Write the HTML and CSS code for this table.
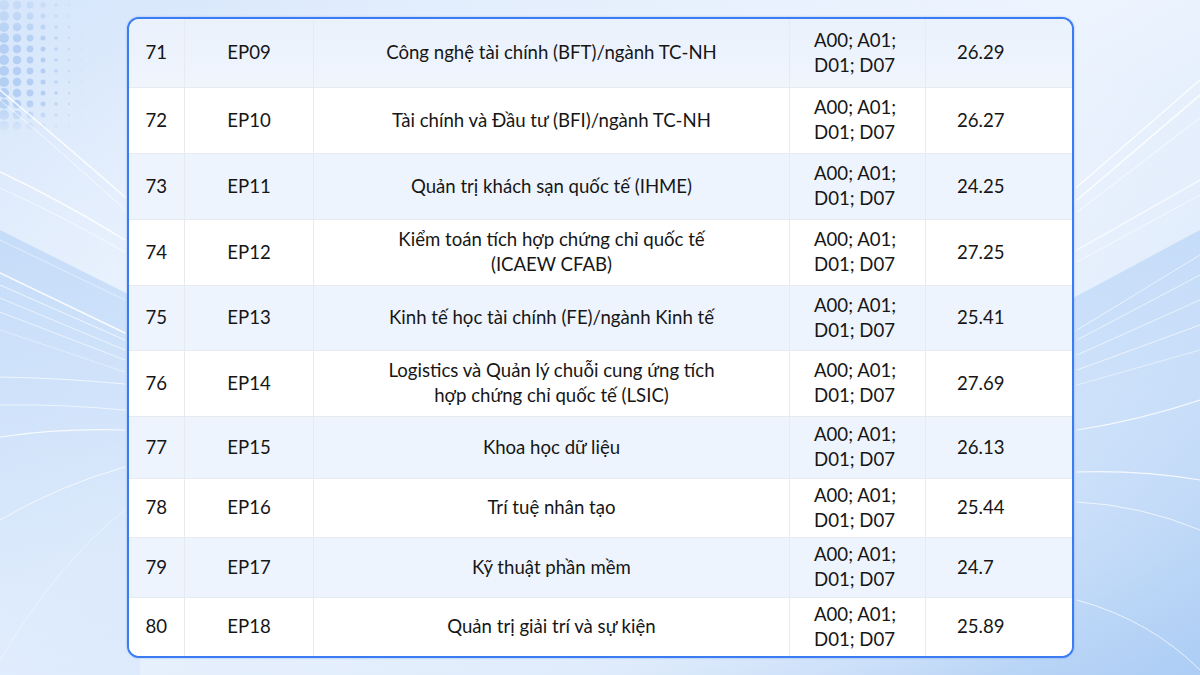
FILE: index.html
```html
<!DOCTYPE html>
<html lang="vi">
<head>
<meta charset="utf-8">
<title>Điểm chuẩn</title>
<link rel="stylesheet" href="styles.css">
</head>
<body>
<svg class="bg" viewBox="0 0 1200 675" preserveAspectRatio="none" aria-hidden="true">
  <defs>
    <linearGradient id="g1" x1="0" y1="0" x2="1" y2="1">
      <stop offset="0" stop-color="#d6e6fb"/>
      <stop offset="0.45" stop-color="#edf4fe"/>
      <stop offset="0.75" stop-color="#dbe9fb"/>
      <stop offset="1" stop-color="#a9cbf4"/>
    </linearGradient>
    <radialGradient id="g2" cx="0.5" cy="0.5" r="0.6">
      <stop offset="0" stop-color="#f4f8ff" stop-opacity="0.9"/>
      <stop offset="1" stop-color="#f4f8ff" stop-opacity="0"/>
    </radialGradient>
    <linearGradient id="band" x1="0" y1="0" x2="0" y2="1">
      <stop offset="0" stop-color="#b9d5f7" stop-opacity="0.7"/>
      <stop offset="1" stop-color="#b9d5f7" stop-opacity="0.2"/>
    </linearGradient>
    <linearGradient id="fade" x1="0" y1="0" x2="0" y2="1">
      <stop offset="0" stop-color="#fff" stop-opacity="0.4"/>
      <stop offset="0.3" stop-color="#fff" stop-opacity="1"/>
      <stop offset="0.75" stop-color="#fff" stop-opacity="1"/>
      <stop offset="1" stop-color="#fff" stop-opacity="0"/>
    </linearGradient>
    <mask id="dm"><rect x="0" y="0" width="120" height="135" fill="url(#fade)"/></mask>
    <pattern id="p0" width="13" height="11" patternUnits="userSpaceOnUse"><circle cx="4" cy="5" r="5" fill="#b4cff3"/></pattern>
    <pattern id="p1" width="13" height="11" patternUnits="userSpaceOnUse"><circle cx="4" cy="5" r="4.3" fill="#b4cff3"/></pattern>
    <pattern id="p2" width="13" height="11" patternUnits="userSpaceOnUse"><circle cx="4" cy="5" r="3.4" fill="#b4cff3"/></pattern>
    <pattern id="p3" width="13" height="11" patternUnits="userSpaceOnUse"><circle cx="4" cy="5" r="2.5" fill="#b4cff3"/></pattern>
    <pattern id="p4" width="13" height="11" patternUnits="userSpaceOnUse"><circle cx="4" cy="5" r="1.8" fill="#bcd4f3"/></pattern>
    <pattern id="p5" width="13" height="11" patternUnits="userSpaceOnUse"><circle cx="4" cy="5" r="1.2" fill="#c4daf5"/></pattern>
    <pattern id="p6" width="13" height="11" patternUnits="userSpaceOnUse"><circle cx="4" cy="5" r="0.7" fill="#cadef6"/></pattern>
  </defs>
  <rect width="1200" height="675" fill="url(#g1)"/>
  <rect width="1200" height="675" fill="url(#g2)"/>
  <path d="M1060 305 L1200 230 L1200 675 L1060 675 Z" fill="url(#band)"/>
  <path d="M0 230 L140 300 L140 675 L0 675 Z" fill="url(#band)"/>
  <g mask="url(#dm)">
    <rect x="-4" y="0" width="13" height="135" fill="url(#p0)"/>
    <rect x="9" y="0" width="13" height="135" fill="url(#p1)"/>
    <rect x="22" y="0" width="13" height="135" fill="url(#p2)"/>
    <rect x="35" y="0" width="13" height="135" fill="url(#p3)"/>
    <rect x="48" y="0" width="13" height="135" fill="url(#p4)"/>
    <rect x="61" y="0" width="13" height="135" fill="url(#p5)"/>
    <rect x="74" y="0" width="13" height="135" fill="url(#p6)"/>
  </g>
  <g fill="none" stroke="#ffffff" stroke-linecap="round">
    <path d="M0 90 Q60 140 125 197" stroke-width="1.4" opacity="0.9"/>
    <path d="M0 100 Q60 150 125 210" stroke-width="1" opacity="0.7"/>
    <path d="M0 172 Q60 200 125 240" stroke-width="1.4" opacity="0.9"/>
    <path d="M0 188 Q60 215 125 252" stroke-width="1" opacity="0.6"/>
    <path d="M0 240 L125 300" stroke-width="0.8" opacity="0.6"/>
    <path d="M0 273 L125 333" stroke-width="1.4" opacity="0.9"/>
    <path d="M0 285 L125 340" stroke-width="1" opacity="0.7"/>
    <path d="M0 298 L125 350" stroke-width="1" opacity="0.6"/>
    <path d="M0 312 L125 360" stroke-width="1" opacity="0.6"/>
    <path d="M0 330 L125 372" stroke-width="0.8" opacity="0.5"/>
    <path d="M0 377 Q60 378 125 384" stroke-width="1" opacity="0.7"/>
    <path d="M0 405 Q60 404 125 410" stroke-width="1" opacity="0.6"/>
    <path d="M0 437 Q60 428 125 430" stroke-width="1.2" opacity="0.8"/>
    <path d="M0 520 Q60 485 125 467" stroke-width="1" opacity="0.7"/>
    <path d="M0 660 Q60 560 125 510" stroke-width="0.8" opacity="0.5"/>
    <path d="M1077 187 L1200 80" stroke-width="1.2" opacity="0.9"/>
    <path d="M1077 200 L1200 95" stroke-width="1.4" opacity="0.9"/>
    <path d="M1077 212 L1200 118" stroke-width="1" opacity="0.7"/>
    <path d="M1077 250 L1200 180" stroke-width="1.2" opacity="0.8"/>
    <path d="M1077 262 L1200 195" stroke-width="1" opacity="0.6"/>
    <path d="M1077 330 L1200 255" stroke-width="1" opacity="0.6"/>
    <path d="M1077 340 L1200 275" stroke-width="1" opacity="0.6"/>
    <path d="M1077 355 L1200 300" stroke-width="1" opacity="0.6"/>
    <path d="M1077 370 L1200 325" stroke-width="1" opacity="0.6"/>
    <path d="M1077 385 L1200 350" stroke-width="1" opacity="0.5"/>
    <path d="M1077 430 Q1140 420 1200 400" stroke-width="1.2" opacity="0.8"/>
    <path d="M1077 472 Q1140 470 1200 480" stroke-width="1.2" opacity="0.8"/>
    <path d="M1077 502 Q1140 505 1200 530" stroke-width="1" opacity="0.7"/>
    <path d="M1077 600 Q1150 620 1200 670" stroke-width="1" opacity="0.7"/>
  </g>
</svg>

<main class="card">
  <table class="grid">
    <colgroup>
      <col class="c-stt"><col class="c-code"><col class="c-name"><col class="c-comb"><col class="c-score">
    </colgroup>
    <tbody>
      <tr><td class="stt">71</td><td class="code">EP09</td><td class="name">Công nghệ tài chính (BFT)/ngành TC-NH</td><td class="comb">A00; A01;<br>D01; D07</td><td class="score">26.29</td></tr>
      <tr><td class="stt">72</td><td class="code">EP10</td><td class="name">Tài chính và Đầu tư (BFI)/ngành TC-NH</td><td class="comb">A00; A01;<br>D01; D07</td><td class="score">26.27</td></tr>
      <tr><td class="stt">73</td><td class="code">EP11</td><td class="name">Quản trị khách sạn quốc tế (IHME)</td><td class="comb">A00; A01;<br>D01; D07</td><td class="score">24.25</td></tr>
      <tr><td class="stt">74</td><td class="code">EP12</td><td class="name">Kiểm toán tích hợp chứng chỉ quốc tế<br>(ICAEW CFAB)</td><td class="comb">A00; A01;<br>D01; D07</td><td class="score">27.25</td></tr>
      <tr><td class="stt">75</td><td class="code">EP13</td><td class="name">Kinh tế học tài chính (FE)/ngành Kinh tế</td><td class="comb">A00; A01;<br>D01; D07</td><td class="score">25.41</td></tr>
      <tr><td class="stt">76</td><td class="code">EP14</td><td class="name">Logistics và Quản lý chuỗi cung ứng tích<br>hợp chứng chỉ quốc tế (LSIC)</td><td class="comb">A00; A01;<br>D01; D07</td><td class="score">27.69</td></tr>
      <tr><td class="stt">77</td><td class="code">EP15</td><td class="name">Khoa học dữ liệu</td><td class="comb">A00; A01;<br>D01; D07</td><td class="score">26.13</td></tr>
      <tr><td class="stt">78</td><td class="code">EP16</td><td class="name">Trí tuệ nhân tạo</td><td class="comb">A00; A01;<br>D01; D07</td><td class="score">25.44</td></tr>
      <tr><td class="stt">79</td><td class="code">EP17</td><td class="name">Kỹ thuật phần mềm</td><td class="comb">A00; A01;<br>D01; D07</td><td class="score">24.7</td></tr>
      <tr><td class="stt">80</td><td class="code">EP18</td><td class="name">Quản trị giải trí và sự kiện</td><td class="comb">A00; A01;<br>D01; D07</td><td class="score">25.89</td></tr>
    </tbody>
  </table>
</main>
</body>
</html>
```

FILE: styles.css
```css
* { box-sizing: border-box; }

html, body {
  margin: 0;
  padding: 0;
}

body {
  width: 1200px;
  height: 675px;
  overflow: hidden;
  position: relative;
  display: flex;
  align-items: center;
  justify-content: center;
  font-family: "Lato", "Noto Sans", sans-serif;
  color: #161616;
  background: #e4eefc;
}

.bg {
  position: absolute;
  left: 0;
  top: 0;
  width: 1200px;
  height: 675px;
  z-index: 0;
}

.card {
  position: relative;
  z-index: 1;
  width: 947px;
  height: 641px;
  border: 2px solid #3b7cf2;
  border-radius: 12px;
  overflow: hidden;
  background: #fff;
  box-shadow: 0 0 2px rgba(59, 124, 242, 0.5);
}

.grid {
  width: 100%;
  height: 100%;
  border-collapse: collapse;
  table-layout: fixed;
  font-size: 18.6px;
  line-height: 25px;
}

.c-stt { width: 56px; }
.c-code { width: 129px; }
.c-name { width: 476px; }
.c-comb { width: 136px; }
.c-score { width: auto; }

.grid td {
  border: 1px solid #e7eaef;
  padding: 0;
  vertical-align: middle;
}

.grid tr:first-child td { border-top: 0; }
.grid tr:last-child td { border-bottom: 0; }
.grid td:first-child { border-left: 0; }
.grid td:last-child { border-right: 0; }

.grid tr:nth-child(odd) td { background: #eef4fd; }
.grid tr:nth-child(even) td { background: #ffffff; }
.grid tr:first-child td { background: linear-gradient(180deg, #e9f1fc, #f0f5fd); }

.grid tr:nth-child(1) { height: 68px; }
.grid tr:nth-child(2) { height: 66px; }
.grid tr:nth-child(3) { height: 66px; }
.grid tr:nth-child(4) { height: 66px; }
.grid tr:nth-child(5) { height: 65px; }
.grid tr:nth-child(6) { height: 66px; }
.grid tr:nth-child(7) { height: 62px; }
.grid tr:nth-child(8) { height: 59px; }
.grid tr:nth-child(9) { height: 60px; }
.grid tr:nth-child(10) { height: 59px; }

.stt, .code, .name { text-align: center; }

.comb {
  text-align: left;
  padding-left: 24px !important;
}

.score {
  text-align: left;
  padding-left: 31px !important;
}
```
